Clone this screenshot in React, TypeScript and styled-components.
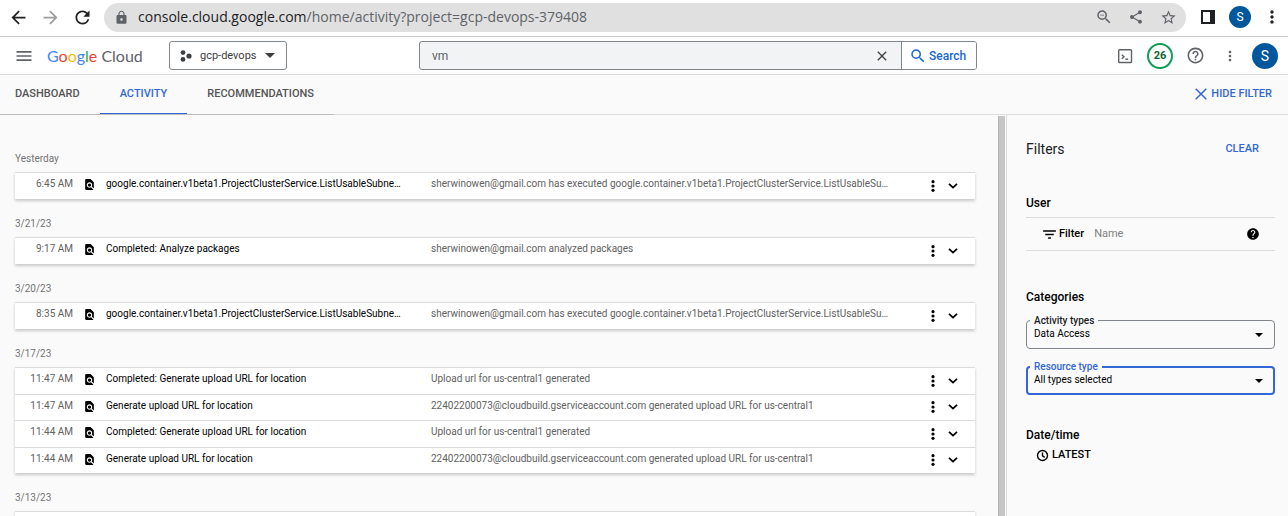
import React from "react";
import styled, { createGlobalStyle } from "styled-components";
import {
  MdArrowBack,
  MdArrowForward,
  MdRefresh,
  MdLock,
  MdZoomOut,
  MdShare,
  MdStarBorder,
  MdMoreVert,
  MdMenu,
  MdClose,
  MdSearch,
  MdHelpOutline,
  MdHelp,
  MdFilterList,
  MdFindInPage,
} from "react-icons/md";

const GlobalStyle = createGlobalStyle`
  *, *::before, *::after { box-sizing: border-box; }
  body {
    margin: 0;
    background: #fafafa;
    color: #202124;
    font-family: Roboto, "Liberation Sans", sans-serif;
    font-size: 11px;
    line-height: 16px;
  }
  button, input, select { font: inherit; color: inherit; margin: 0; }
  svg { display: block; flex: none; }
`;

const Shell = styled.div`
  display: flex;
  flex-direction: column;
  height: 100vh;
  overflow: hidden;
`;

const IconButton = styled.button<{ $size: number; $color?: string }>`
  display: flex;
  align-items: center;
  justify-content: center;
  flex: none;
  width: ${(p) => p.$size}px;
  height: ${(p) => p.$size}px;
  padding: 0;
  border: 0;
  background: none;
  color: ${(p) => p.$color ?? "#5f6368"};
  cursor: pointer;
`;

const Avatar = styled.button<{ $size: number }>`
  display: flex;
  align-items: center;
  justify-content: center;
  flex: none;
  width: ${(p) => p.$size}px;
  height: ${(p) => p.$size}px;
  padding: 0;
  border: 0;
  border-radius: 50%;
  background: #01579b;
  color: #fff;
  font-size: ${(p) => (p.$size > 24 ? 14 : 12)}px;
`;

/* Browser bar */

const BrowserBar = styled.div`
  display: flex;
  align-items: center;
  flex: none;
  height: 37px;
  padding: 0 0 2px 2px;
  border-bottom: 1px solid #cacaca;
  background: #fff;
`;

const AddressBar = styled.div`
  display: flex;
  align-items: center;
  flex: 1;
  min-width: 0;
  height: 29px;
  margin: 0 6px;
  padding: 0 2px 0 10px;
  border-radius: 15px;
  background: #e0e0e0;
`;

const Url = styled.div`
  flex: 1;
  min-width: 0;
  margin-left: 9px;
  overflow: hidden;
  white-space: nowrap;
  font: 14px/20px "Open Sans", "Noto Sans", sans-serif;
  color: #5f6368;

  b {
    font-weight: 400;
    color: #202124;
  }
`;

/* Console header */

const Header = styled.header`
  display: grid;
  grid-template-columns: 407px minmax(0, 558px) 1fr;
  align-items: center;
  flex: none;
  height: 38px;
  padding: 0 10px 0 12px;
  border-bottom: 1px solid #dadce0;
  background: #fff;
`;

const Brand = styled.div`
  display: flex;
  align-items: center;
`;

const Logo = styled.a`
  width: 133px;
  padding-left: 11px;
  font: 16px/24px Lato, sans-serif;
  color: #5f6368;
  text-decoration: none;
  white-space: nowrap;
`;

const Letter = styled.span<{ $color: string }>`
  color: ${(p) => p.$color};
`;

const ProjectButton = styled.button`
  display: flex;
  align-items: center;
  gap: 8px;
  height: 29px;
  padding: 0 11px 0 10px;
  border: 1px solid #80868b;
  border-radius: 3px;
  background: #fff;
  color: #3c4043;
`;

const SearchForm = styled.form`
  display: flex;
  height: 29px;
  border: 1px solid #80868b;
  border-radius: 3px;
  background: #f1f3f4;
  overflow: hidden;
`;

const SearchInput = styled.input`
  flex: 1;
  min-width: 0;
  padding: 0 12px;
  border: 0;
  outline: 0;
  background: none;
  font-size: 12px;
  color: #5f6368;
`;

const ClearButton = styled(IconButton)`
  width: 39px;
`;

const SearchButton = styled.button`
  display: flex;
  align-items: center;
  gap: 2px;
  width: 75px;
  padding: 0 0 0 7px;
  border: 0;
  border-left: 1px solid #80868b;
  background: #fff;
  color: #1967d2;
  font-size: 12px;
  font-weight: 500;
`;

const HeaderTools = styled.div`
  display: flex;
  align-items: center;
  justify-content: flex-end;
  gap: 9px;
`;

const TrialBadge = styled.button`
  width: 26px;
  height: 26px;
  padding: 0;
  border: 2px solid #0f9d58;
  border-radius: 50%;
  background: #fff;
  color: #0d652d;
  font-size: 11px;
  font-weight: 700;
`;

/* Tabs */

const TabBar = styled.div`
  display: flex;
  justify-content: space-between;
  flex: none;
  height: 40px;
  padding-right: 16px;
  border-bottom: 1px solid #dadce0;
`;

const Tabs = styled.nav`
  display: flex;
  height: 40px;
  border-bottom: 1px solid #bdbdbd;
`;

const Tab = styled.a<{ $active?: boolean }>`
  padding: 11px 20px 0;
  border-bottom: 1px solid ${(p) => (p.$active ? "#3367d6" : "transparent")};
  color: ${(p) => (p.$active ? "#3367d6" : "#545454")};
  font-weight: 500;
  text-decoration: none;

  &:first-child {
    padding-left: 15px;
  }
`;

const TextButton = styled.button`
  display: flex;
  align-items: center;
  gap: 4px;
  padding: 0;
  border: 0;
  background: none;
  color: #3367d6;
  font-weight: 500;
  cursor: pointer;
`;

const HideFilterButton = styled(TextButton)`
  padding-bottom: 2px;
`;

/* Activity list */

const Main = styled.main`
  display: flex;
  flex: 1;
  min-height: 0;
`;

const ActivityList = styled.section`
  flex: 1;
  min-width: 0;
  overflow: hidden;
  padding: 25px 23px 0 15px;
`;

const DayHeading = styled.h2`
  height: 38px;
  margin: 0;
  padding-top: 17px;
  color: #757575;
  font-size: 10px;
  font-weight: 400;
  line-height: 16px;

  &:first-child {
    height: 32px;
    padding-top: 11px;
  }
`;

const DayTable = styled.table`
  width: 100%;
  table-layout: fixed;
  border-spacing: 0;
  background: #fff;
  box-shadow: 0 2px 3px rgba(0, 0, 0, 0.2);
  font-size: 10px;
`;

const Row = styled.tr`
  height: 27px;

  &:nth-child(even) {
    height: 26px;
  }
`;

const Cell = styled.td<{ $width?: number; $dark?: boolean; $align?: string }>`
  width: ${(p) => (p.$width ? `${p.$width}px` : "auto")};
  padding: 0 0 4px;
  border-top: 1px solid #dcdcdc;
  color: ${(p) => (p.$dark ? "#000" : "#616161")};
  text-align: ${(p) => p.$align ?? "left"};
  vertical-align: middle;
  white-space: nowrap;
`;

const IconCell = styled(Cell)`
  padding: 0 0 3px 10px;
`;

const ActionCell = styled(Cell)`
  padding: 0 0 1px;
`;

const Clip = styled.div`
  overflow: hidden;
  text-overflow: ellipsis;
`;

const Actions = styled.div`
  display: flex;
  gap: 2px;
  padding-left: 15px;
`;

const ScrollThumb = styled.div`
  flex: none;
  width: 8px;
  margin-top: 1px;
  border-left: 1px solid #b4b4b4;
  border-right: 1px solid #fafafa;
  background: #c6c6c6;
`;

/* Filters */

const FilterPanel = styled.aside`
  flex: none;
  width: 282px;
  padding: 24px 13px 0 19px;
  border-left: 1px solid #dadce0;
`;

const PanelHead = styled.div`
  display: flex;
  align-items: center;
  justify-content: space-between;
  margin-bottom: 34px;
  padding-right: 16px;
`;

const PanelTitle = styled.h2`
  margin: 0;
  font-size: 14px;
  font-weight: 400;
  line-height: 20px;
`;

const SectionTitle = styled.h3`
  margin: 0;
  font-size: 12px;
  font-weight: 500;
  line-height: 20px;
  color: #000;
`;

const NameFilter = styled.div`
  display: flex;
  align-items: center;
  height: 34px;
  margin: 4px 0 36px;
  padding: 0 15px;
  border: solid #dadce0;
  border-width: 1px 0;
  color: #000;

  label {
    margin: 0 10px 0 1px;
    font-weight: 500;
  }
`;

const NameInput = styled.input`
  flex: 1;
  min-width: 0;
  padding: 0;
  border: 0;
  outline: 0;
  background: none;

  &::placeholder {
    color: #808080;
    opacity: 1;
  }
`;

const Field = styled.div<{ $focused?: boolean }>`
  position: relative;
  display: flex;
  align-items: center;
  height: 29px;
  margin: 13px 0 17px;
  border: ${(p) => (p.$focused ? "2px solid #3367d6" : "1px solid #80868b")};
  border-radius: 4px;
  color: #000;

  label {
    position: absolute;
    top: ${(p) => (p.$focused ? -9 : -8)}px;
    left: ${(p) => (p.$focused ? 2 : 3)}px;
    padding: 0 4px;
    background: #fafafa;
    color: ${(p) => (p.$focused ? "#3367d6" : "#202124")};
    font-size: 10px;
    font-weight: 500;
  }

  svg {
    margin-right: ${(p) => (p.$focused ? 10 : 11)}px;
    pointer-events: none;
  }
`;

const Select = styled.select<{ $focused?: boolean }>`
  appearance: none;
  flex: 1;
  min-width: 0;
  height: 25px;
  padding: 0 0 1px ${(p) => (p.$focused ? 6 : 7)}px;
  border: 0;
  outline: 0;
  background: none;
  font-size: 10px;
`;

const DateTime = styled.section`
  margin-top: 30px;
`;

const LatestButton = styled(TextButton)`
  gap: 3px;
  margin: 2px 0 0 10px;
  color: #000;
`;

const Caret = ({ width = 8 }: { width?: number }) => (
  <svg width={width} height={width / 2} viewBox="0 0 10 5" fill="currentColor" aria-hidden="true">
    <path d="M0 0h10L5 5z" />
  </svg>
);

const Chevron = () => (
  <svg width="10" height="6" viewBox="0 0 10 6" fill="none" stroke="currentColor" strokeWidth="1.8" aria-hidden="true">
    <path d="M1 .8l4 3.8L9 .8" />
  </svg>
);

const MoreDots = () => (
  <svg width="4" height="12" viewBox="0 0 4 12" fill="currentColor" aria-hidden="true">
    <circle cx="2" cy="1.7" r="1.6" />
    <circle cx="2" cy="6" r="1.6" />
    <circle cx="2" cy="10.3" r="1.6" />
  </svg>
);

const ClockIcon = () => (
  <svg width="13" height="13" viewBox="0 0 13 13" fill="none" stroke="currentColor" strokeWidth="1.4" aria-hidden="true">
    <circle cx="6.5" cy="6.5" r="5" />
    <path d="M6.5 3.4v3.4l2.2 1.6" />
  </svg>
);

const SidePanelIcon = () => (
  <svg width="14" height="14" viewBox="0 0 14 14" fill="#202124" aria-hidden="true">
    <path fillRule="evenodd" d="M0 0h14v14H0zM2 2v10h7V2z" />
  </svg>
);

const ProjectIcon = () => (
  <svg width="12" height="12" viewBox="0 0 12 12" fill="#3c4043" aria-hidden="true">
    <circle cx="3" cy="2.6" r="2.4" />
    <circle cx="9" cy="6" r="2.6" />
    <circle cx="3" cy="9.4" r="2.4" />
  </svg>
);

const ShellIcon = () => (
  <svg width="16" height="16" viewBox="0 0 16 16" fill="none" stroke="#5f6368" strokeWidth="1.4" aria-hidden="true">
    <rect x="1.7" y="1.7" width="12.8" height="12.8" rx="0.8" />
    <path d="M4.8 6.8l2.2 2-2.2 2M8.4 11.2h2.8" />
  </svg>
);

const CloseThin = () => (
  <svg width="12" height="12" viewBox="0 0 12 12" stroke="currentColor" strokeWidth="1.5" aria-hidden="true">
    <path d="M.7.7l10.6 10.6M11.3.7L.7 11.3" />
  </svg>
);

type Entry = { time: string; title: string; detail: string };

const CLUSTER = "google.container.v1beta1.ProjectClusterService.ListUsableSubne…";
const CLUSTER_DETAIL =
  "sherwinowen@gmail.com has executed google.container.v1beta1.ProjectClusterService.ListUsableSu…";
const DONE_UPLOAD = "Completed: Generate upload URL for location";
const UPLOAD = "Generate upload URL for location";
const UPLOAD_DONE_DETAIL = "Upload url for us-central1 generated";
const UPLOAD_DETAIL = "22402200073@cloudbuild.gserviceaccount.com generated upload URL for us-central1";

const days: { day: string; entries: Entry[] }[] = [
  { day: "Yesterday", entries: [{ time: "6:45 AM", title: CLUSTER, detail: CLUSTER_DETAIL }] },
  {
    day: "3/21/23",
    entries: [{ time: "9:17 AM", title: "Completed: Analyze packages", detail: "sherwinowen@gmail.com analyzed packages" }],
  },
  { day: "3/20/23", entries: [{ time: "8:35 AM", title: CLUSTER, detail: CLUSTER_DETAIL }] },
  {
    day: "3/17/23",
    entries: [
      { time: "11:47 AM", title: DONE_UPLOAD, detail: UPLOAD_DONE_DETAIL },
      { time: "11:47 AM", title: UPLOAD, detail: UPLOAD_DETAIL },
      { time: "11:44 AM", title: DONE_UPLOAD, detail: UPLOAD_DONE_DETAIL },
      { time: "11:44 AM", title: UPLOAD, detail: UPLOAD_DETAIL },
    ],
  },
  { day: "3/13/23", entries: [{ time: "", title: "", detail: "" }] },
];

const logoLetters: [string, string][] = [
  ["G", "#4285f4"],
  ["o", "#ea4335"],
  ["o", "#fbbc04"],
  ["g", "#4285f4"],
  ["l", "#34a853"],
  ["e", "#ea4335"],
];

const ActivityRow = ({ entry }: { entry: Entry }) => (
  <Row>
    <Cell $width={58} $align="right">
      {entry.time}
    </Cell>
    <IconCell $width={33} $dark>
      {entry.time && <MdFindInPage size={13} />}
    </IconCell>
    <Cell $width={325} $dark>
      <Clip>{entry.title}</Clip>
    </Cell>
    <Cell>
      <Clip>{entry.detail}</Clip>
    </Cell>
    <ActionCell $width={66} $dark>
      {entry.time && (
        <Actions>
          <IconButton type="button" $size={18} $color="#000" aria-label="More actions">
            <MoreDots />
          </IconButton>
          <IconButton type="button" $size={18} $color="#000" aria-label="Expand">
            <Chevron />
          </IconButton>
        </Actions>
      )}
    </ActionCell>
  </Row>
);

export default function App() {
  return (
    <Shell>
      <GlobalStyle />
      <BrowserBar>
        <IconButton type="button" $size={32} $color="#202124" aria-label="Back">
          <MdArrowBack size={21} />
        </IconButton>
        <IconButton type="button" $size={32} $color="#9e9e9e" aria-label="Forward">
          <MdArrowForward size={21} />
        </IconButton>
        <IconButton type="button" $size={32} $color="#202124" aria-label="Reload">
          <MdRefresh size={21} />
        </IconButton>
        <AddressBar>
          <MdLock size={15} color="#5f6368" />
          <Url>
            <b>console.cloud.google.com</b>/home/activity?project=gcp-devops-379408
          </Url>
          <IconButton type="button" $size={32} aria-label="Zoom">
            <MdZoomOut size={18} />
          </IconButton>
          <IconButton type="button" $size={32} aria-label="Share">
            <MdShare size={16} />
          </IconButton>
          <IconButton type="button" $size={32} aria-label="Bookmark">
            <MdStarBorder size={17} />
          </IconButton>
        </AddressBar>
        <IconButton type="button" $size={32} aria-label="Side panel">
          <SidePanelIcon />
        </IconButton>
        <IconButton as="div" $size={32}>
          <Avatar type="button" $size={22}>S</Avatar>
        </IconButton>
        <IconButton type="button" $size={32} $color="#202124" aria-label="Browser menu">
          <MdMoreVert size={20} />
        </IconButton>
      </BrowserBar>

      <Header>
        <Brand>
          <IconButton type="button" $size={24} aria-label="Navigation menu">
            <MdMenu size={20} />
          </IconButton>
          <Logo href="#">
            {logoLetters.map(([letter, color], i) => (
              <Letter key={i} $color={color}>
                {letter}
              </Letter>
            ))}{" "}
            Cloud
          </Logo>
          <ProjectButton type="button">
            <ProjectIcon />
            gcp-devops
            <Caret width={10} />
          </ProjectButton>
        </Brand>
        <SearchForm onSubmit={(e) => e.preventDefault()}>
          <SearchInput aria-label="Search" defaultValue="vm" />
          <ClearButton type="button" $size={27} $color="#3c4043" aria-label="Clear search">
            <MdClose size={16} />
          </ClearButton>
          <SearchButton type="submit">
            <MdSearch size={18} />
            Search
          </SearchButton>
        </SearchForm>
        <HeaderTools>
          <IconButton type="button" $size={26} aria-label="Cloud Shell">
            <ShellIcon />
          </IconButton>
          <TrialBadge type="button">26</TrialBadge>
          <IconButton type="button" $size={26} aria-label="Help">
            <MdHelpOutline size={19} />
          </IconButton>
          <IconButton type="button" $size={26} aria-label="Settings">
            <MdMoreVert size={16} />
          </IconButton>
          <Avatar type="button" $size={26}>S</Avatar>
        </HeaderTools>
      </Header>

      <TabBar>
        <Tabs>
          <Tab href="#">DASHBOARD</Tab>
          <Tab href="#" $active>
            ACTIVITY
          </Tab>
          <Tab href="#">RECOMMENDATIONS</Tab>
        </Tabs>
        <HideFilterButton type="button">
          <CloseThin />
          HIDE FILTER
        </HideFilterButton>
      </TabBar>

      <Main>
        <ActivityList>
          {days.map(({ day, entries }) => (
            <React.Fragment key={day}>
              <DayHeading>{day}</DayHeading>
              <DayTable>
                <tbody>
                  {entries.map((entry, i) => (
                    <ActivityRow key={i} entry={entry} />
                  ))}
                </tbody>
              </DayTable>
            </React.Fragment>
          ))}
        </ActivityList>
        <ScrollThumb />
        <FilterPanel>
          <PanelHead>
            <PanelTitle>Filters</PanelTitle>
            <TextButton type="button">CLEAR</TextButton>
          </PanelHead>

          <SectionTitle>User</SectionTitle>
          <NameFilter>
            <MdFilterList size={17} />
            <label htmlFor="user-name">Filter</label>
            <NameInput id="user-name" placeholder="Name" />
            <MdHelp size={14} />
          </NameFilter>

          <SectionTitle>Categories</SectionTitle>
          <Field>
            <label htmlFor="activity-types">Activity types</label>
            <Select id="activity-types">
              <option>Data Access</option>
            </Select>
            <Caret />
          </Field>
          <Field $focused>
            <label htmlFor="resource-type">Resource type</label>
            <Select id="resource-type" $focused>
              <option>All types selected</option>
            </Select>
            <Caret />
          </Field>

          <DateTime>
            <SectionTitle>Date/time</SectionTitle>
            <LatestButton type="button">
              <ClockIcon />
              LATEST
            </LatestButton>
          </DateTime>
        </FilterPanel>
      </Main>
    </Shell>
  );
}
